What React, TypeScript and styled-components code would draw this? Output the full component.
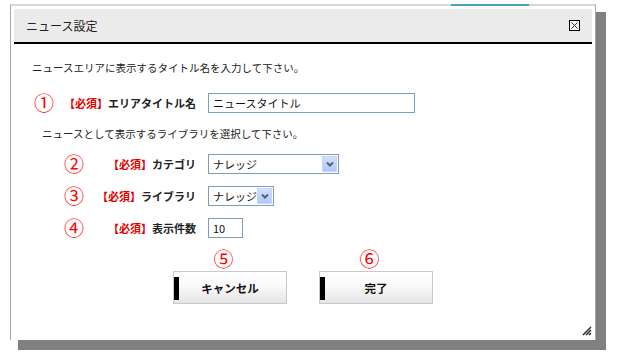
import React from "react";
import styled, { createGlobalStyle } from "styled-components";

const GlobalStyle = createGlobalStyle`
  html, body {
    margin: 0;
    padding: 0;
    background: #ffffff;
  }
  body {
    font-family: "Noto Sans CJK JP", "Noto Sans", sans-serif;
    color: #222222;
  }
  * {
    box-sizing: border-box;
  }
`;

const Stage = styled.div`
  width: 622px;
  height: 357px;
  padding: 4px 0 0 10px;
  overflow: hidden;
`;

const Dialog = styled.div`
  position: relative;
  width: 586px;
  height: 336px;
  padding: 3px;
  background: #ffffff;
  border-top: 2px solid #d6d6d6;
  border-left: 1px solid #a6a6a6;
  border-right: 1px solid #a6a6a6;
  box-shadow: 9px 9px 0 1px #808080;
`;

// bit of the page tab peeking above the dialog edge
const TopAccent = styled.div`
  position: absolute;
  top: -2px;
  left: 440px;
  width: 78px;
  height: 2px;
  background: #4b9fc0;
`;

const Header = styled.div`
  display: flex;
  align-items: center;
  justify-content: space-between;
  height: 35px;
  padding: 0 12px;
  background: #ebebeb;
  border-bottom: 2px solid #000000;
`;

const HeaderTitle = styled.span`
  font-size: 12px;
  color: #222222;
`;

const CloseButton = styled.button`
  display: flex;
  align-items: center;
  justify-content: center;
  width: 11px;
  height: 11px;
  padding: 0;
  border: 1px solid #000000;
  background: #f4f4f4;
  cursor: pointer;
`;

const Body = styled.div`
  display: flex;
  flex-direction: column;
  padding-top: 17px;
`;

const Guide = styled.p<{ $indent: number; $top: number }>`
  margin: ${p => p.$top}px 0 0 ${p => p.$indent}px;
  font-size: 10.5px;
  line-height: 14px;
  color: #222222;
`;

const FieldRow = styled.div<{ $top: number }>`
  display: grid;
  grid-template-columns: 182px 1fr;
  column-gap: 12px;
  align-items: center;
  height: 20px;
  margin-top: ${p => p.$top}px;
`;

const LabelCell = styled.div<{ $indent: number }>`
  display: flex;
  align-items: center;
  padding-left: ${p => p.$indent}px;
`;

const Mark = styled.span`
  font-size: 20px;
  line-height: 20px;
  color: #ff0000;
`;

const Label = styled.span`
  margin-left: auto;
  font-size: 11px;
  font-weight: bold;
  color: #222222;
  white-space: nowrap;
`;

const Required = styled.span`
  color: #e00000;
`;

const TextBox = styled.div<{ $w: number }>`
  display: flex;
  align-items: center;
  width: ${p => p.$w}px;
  height: 20px;
  padding-left: 4px;
  border: 1px solid #7f9db9;
  background: #ffffff;
  font-size: 11px;
  color: #111111;
`;

const SelectBox = styled.div<{ $w: number }>`
  display: flex;
  align-items: stretch;
  width: ${p => p.$w}px;
  height: 20px;
  padding: 1px;
  border: 1px solid #7f9db9;
  background: #ffffff;
`;

const SelectValue = styled.span`
  flex: 1;
  display: flex;
  align-items: center;
  padding-left: 3px;
  font-size: 11px;
  color: #111111;
`;

const SelectArrow = styled.span`
  display: flex;
  align-items: center;
  justify-content: center;
  width: 15px;
  border: 1px solid #c3d4fa;
  background: linear-gradient(#d3e0fd, #b1c7f5);
`;

const ActionBar = styled.div`
  display: flex;
  justify-content: center;
  gap: 32px;
  margin-top: 11px;
`;

const ActionColumn = styled.div`
  display: flex;
  flex-direction: column;
  align-items: center;
  gap: 2px;
`;

const ActionMark = styled(Mark)`
  margin-right: 13px;
`;

const ActionButton = styled.button`
  position: relative;
  width: 114px;
  height: 33px;
  border: 1px solid #c9c9c9;
  background: linear-gradient(#ffffff, #fafafa 45%, #e4e4e4);
  font-family: "Noto Sans CJK JP", "Noto Sans", sans-serif;
  font-size: 11.5px;
  font-weight: bold;
  color: #111111;
  cursor: pointer;

  &::before {
    content: "";
    position: absolute;
    left: 0;
    top: 5px;
    width: 5px;
    height: 23px;
    background: #000000;
  }
`;

const Grip = styled.svg`
  position: absolute;
  right: 3px;
  bottom: 4px;
`;

function Chevron() {
  return (
    <svg width="8" height="6" viewBox="0 0 8 6">
      <path d="M1 1.5 L4 4.5 L7 1.5" fill="none" stroke="#4d6185" strokeWidth="2" />
    </svg>
  );
}

type FieldProps = {
  mark: string;
  indent: number;
  top: number;
  label: string;
  children: React.ReactNode;
};

function Field({ mark, indent, top, label, children }: FieldProps) {
  return (
    <FieldRow $top={top}>
      <LabelCell $indent={indent}>
        <Mark>{mark}</Mark>
        <Label>
          <Required>【必須】</Required>
          {label}
        </Label>
      </LabelCell>
      <div>{children}</div>
    </FieldRow>
  );
}

type SelectProps = { value: string; width: number };

function FakeSelect({ value, width }: SelectProps) {
  return (
    <SelectBox $w={width}>
      <SelectValue>{value}</SelectValue>
      <SelectArrow>
        <Chevron />
      </SelectArrow>
    </SelectBox>
  );
}

export default function App() {
  return (
    <>
      <GlobalStyle />
      <Stage>
        <Dialog>
          <TopAccent />
          <Header>
            <HeaderTitle>ニュース設定</HeaderTitle>
            <CloseButton aria-label="close">
              <svg width="7" height="7" viewBox="0 0 7 7">
                <path d="M0.5 0.5 L6.5 6.5 M6.5 0.5 L0.5 6.5" stroke="#333" strokeWidth="1" />
              </svg>
            </CloseButton>
          </Header>
          <Body>
            <Guide $indent={18} $top={0}>ニュースエリアに表示するタイトル名を入力して下さい。</Guide>
            <Field mark="①" indent={20} top={18} label="エリアタイトル名">
              <TextBox $w={207}>ニュースタイトル</TextBox>
            </Field>
            <Guide $indent={28} $top={14}>ニュースとして表示するライブラリを選択して下さい。</Guide>
            <Field mark="②" indent={50} top={13} label="カテゴリ">
              <FakeSelect value="ナレッジ" width={131} />
            </Field>
            <Field mark="③" indent={50} top={12} label="ライブラリ">
              <FakeSelect value="ナレッジ" width={66} />
            </Field>
            <Field mark="④" indent={50} top={12} label="表示件数">
              <TextBox $w={35}>10</TextBox>
            </Field>
            <ActionBar>
              <ActionColumn>
                <ActionMark>⑤</ActionMark>
                <ActionButton>キャンセル</ActionButton>
              </ActionColumn>
              <ActionColumn>
                <ActionMark>⑥</ActionMark>
                <ActionButton>完了</ActionButton>
              </ActionColumn>
            </ActionBar>
          </Body>
          <Grip width="10" height="10" viewBox="0 0 10 10">
            <path d="M9 1 L1 9 M9 4 L4 9 M9 7 L7 9" stroke="#222" strokeWidth="1.4" />
          </Grip>
        </Dialog>
      </Stage>
    </>
  );
}
